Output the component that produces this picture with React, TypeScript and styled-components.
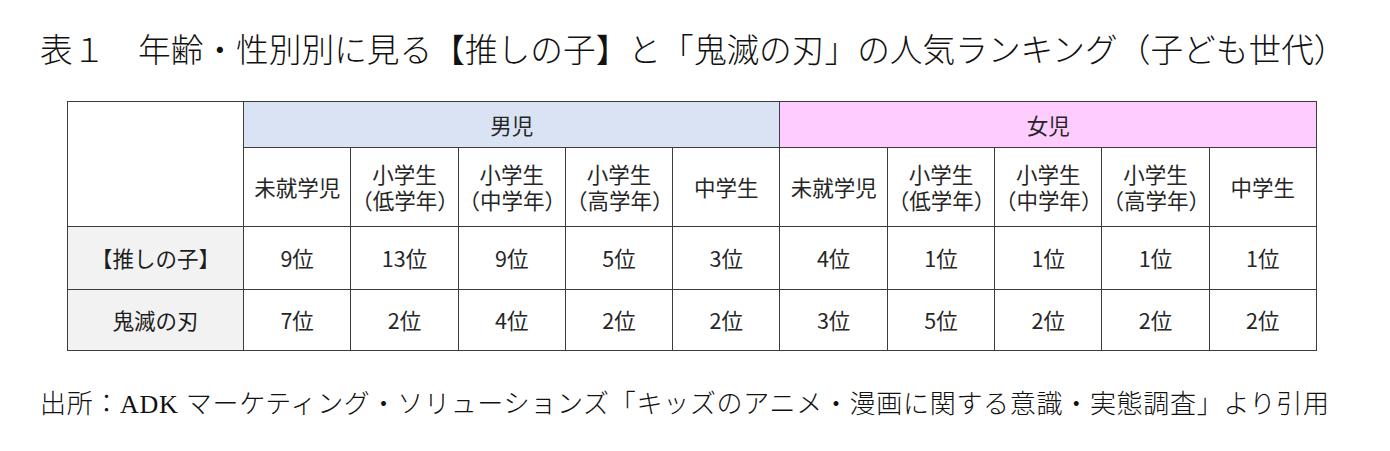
import * as React from "react";
import styled, { createGlobalStyle } from "styled-components";

const GlobalStyle = createGlobalStyle`
  html, body {
    margin: 0;
    padding: 0;
    background: #ffffff;
  }
`;

const Page = styled.div`
  width: 1390px;
  height: 451px;
  padding: 31px 0 0 40px;
  box-sizing: border-box;
  color: #111;
`;

const Title = styled.h1`
  margin: 0;
  font-family: "Liberation Serif", "Noto Sans CJK JP", serif;
  font-weight: 300;
  font-size: 32.7px;
  line-height: 40px;
  white-space: nowrap;
`;

const Table = styled.table`
  margin: 30px 0 0 27px;
  width: 1250px;
  table-layout: fixed;
  border-collapse: collapse;
  font-family: "Noto Sans CJK JP", "Noto Sans", sans-serif;
  font-size: 21.5px;
  color: #262626;
`;

const Cell = styled.td<{ $bg?: string; $h?: number }>`
  border: 1.5px solid #3c3c3c;
  background: ${(p) => p.$bg || "#ffffff"};
  height: ${(p) => (p.$h ? `${p.$h}px` : "auto")};
  text-align: center;
  vertical-align: middle;
  padding: 0;
  line-height: 26px;
  white-space: pre;
`;

const RowLabel = styled(Cell)`
  background: #f2f2f2;
  color: #1e1e1e;
`;

const Source = styled.p`
  margin: 38px 0 0;
  font-family: "Liberation Serif", "Noto Sans CJK JP", serif;
  font-weight: 300;
  font-size: 26px;
  letter-spacing: 0.7px;
  line-height: 32px;
  white-space: nowrap;
`;

const grades: string[] = [
  "未就学児",
  "小学生\n（低学年）",
  "小学生\n（中学年）",
  "小学生\n（高学年）",
  "中学生",
];

const rows: { label: string; ranks: number[] }[] = [
  { label: "【推しの子】", ranks: [9, 13, 9, 5, 3, 4, 1, 1, 1, 1] },
  { label: "鬼滅の刃", ranks: [7, 2, 4, 2, 2, 3, 5, 2, 2, 2] },
];

const App = () => {
  const allGrades = [...grades, ...grades];
  return (
    <>
      <GlobalStyle />
      <Page>
        <Title>
          表１　年齢・性別別に見る【推しの子】と「鬼滅の刃」の人気ランキング（子ども世代）
        </Title>
        <Table>
          <colgroup>
            <col style={{ width: 176 }} />
            {allGrades.map((_, i) => (
              <col key={i} />
            ))}
          </colgroup>
          <tbody>
            <tr>
              <Cell rowSpan={2} />
              <Cell colSpan={5} $bg="#dae3f3" $h={45}>
                男児
              </Cell>
              <Cell colSpan={5} $bg="#ffccff" $h={45}>
                女児
              </Cell>
            </tr>
            <tr>
              {allGrades.map((g, i) => (
                <Cell key={i} $h={78}>
                  {g}
                </Cell>
              ))}
            </tr>
            {rows.map((r, i) => (
              <tr key={r.label}>
                <RowLabel $h={i === 0 ? 62 : 60}>{r.label}</RowLabel>
                {r.ranks.map((n, j) => (
                  <Cell key={j}>{n}位</Cell>
                ))}
              </tr>
            ))}
          </tbody>
        </Table>
        <Source>
          出所：ADK マーケティング・ソリューションズ「キッズのアニメ・漫画に関する意識・実態調査」より引用
        </Source>
      </Page>
    </>
  );
};

export default App;
